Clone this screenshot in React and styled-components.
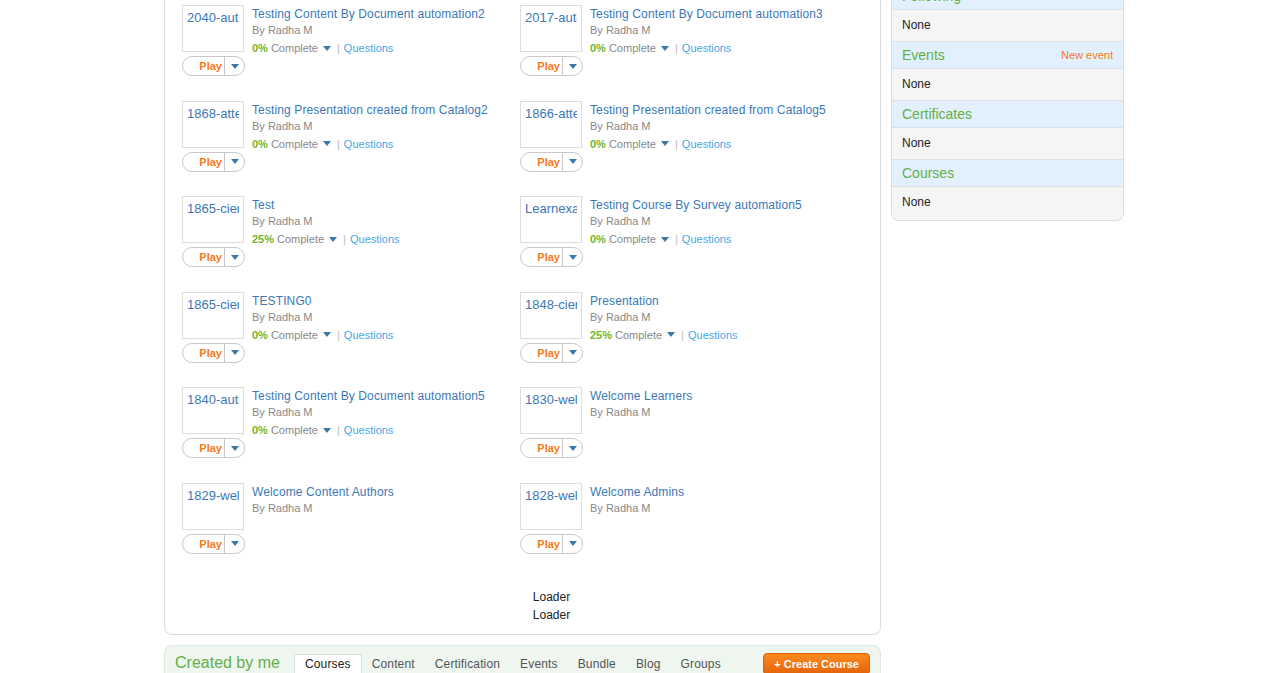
import React from 'react'
import styled, { createGlobalStyle } from 'styled-components'

const GlobalStyle = createGlobalStyle`
  html, body {
    margin: 0;
    padding: 0;
    background: #fff;
    overflow: hidden;
  }
  body {
    font-family: "Liberation Sans", Arial, sans-serif;
    color: #222;
  }
`

const Page = styled.div`
  display: flex;
  align-items: flex-start;
  padding-left: 164px;
  margin-top: -17px;
`
const MainCol = styled.div`
  width: 717px;
  display: flex;
  flex-direction: column;
  gap: 10px;
`
const Panel = styled.div`
  border: 1px solid #dcdcdc;
  border-top: none;
  border-radius: 0 0 8px 8px;
  padding: 22px 0 10px 17px;
`
const Grid = styled.div`
  display: grid;
  grid-template-columns: 338px 338px;
  grid-auto-rows: 95.6px;
`
const Item = styled.div`
  display: flex;
  gap: 7px;
`
const ThumbCol = styled.div`
  width: 63px;
  display: flex;
  flex-direction: column;
  gap: 4px;
`
const Thumb = styled.div`
  width: 62px;
  height: 47px;
  box-sizing: border-box;
  border: 1px solid #ddd;
  padding: 4px 4px 0 4px;
`
const ThumbLabel = styled.div`
  font-size: 13px;
  line-height: 16px;
  color: #3c78b5;
  white-space: nowrap;
  overflow: hidden;
`
const PlayButton = styled.div`
  width: 63px;
  height: 20px;
  box-sizing: border-box;
  border: 1px solid #c8c8c8;
  border-radius: 10px;
  display: flex;
  align-items: center;
  background: #fff;
`
const PlayLabel = styled.span`
  width: 42px;
  height: 100%;
  box-sizing: border-box;
  border-right: 1px solid #c8c8c8;
  display: flex;
  align-items: center;
  justify-content: flex-end;
  padding-right: 2px;
  font-size: 11px;
  font-weight: bold;
  color: #f47b20;
`
const Caret = styled.span`
  flex: 1;
  display: flex;
  justify-content: center;
  align-items: center;
  &::after {
    content: "";
    border-left: 4px solid transparent;
    border-right: 4px solid transparent;
    border-top: 5px solid #3b78aa;
  }
`
const Info = styled.div`
  display: flex;
  flex-direction: column;
  padding-top: 1px;
`
const Title = styled.a`
  font-size: 12px;
  line-height: 16px;
  letter-spacing: 0.12px;
  color: #3c78b5;
  text-decoration: none;
`
const Author = styled.div`
  font-size: 11px;
  line-height: 16px;
  color: #888;
`
const Status = styled.div`
  display: flex;
  align-items: center;
  font-size: 11px;
  line-height: 16px;
  color: #888;
  margin-top: 2px;
`
const Percent = styled.b`
  color: #72b52b;
  margin-right: 3px;
`
const StatusCaret = styled.span`
  display: inline-block;
  margin: 0 6px 0 5px;
  border-left: 4px solid transparent;
  border-right: 4px solid transparent;
  border-top: 5px solid #3b78aa;
`
const Pipe = styled.span`
  color: #bbb;
  margin-right: 4px;
`
const Questions = styled.a`
  color: #45a7e8;
  text-decoration: none;
`
const Loaders = styled.div`
  padding: 9px 0 0 41px;
  text-align: center;
  font-size: 12px;
  line-height: 18px;
  color: #222;
`
const TabsPanel = styled.div`
  background: #eef6ef;
  border: 1px solid #dfe9df;
  border-bottom: none;
  border-radius: 8px 8px 0 0;
  height: 40px;
  display: flex;
  align-items: flex-start;
  padding: 0 10px;
`
const TabsTitle = styled.h2`
  margin: 0 14px 0 0;
  padding-top: 7px;
  font-size: 16px;
  font-weight: normal;
  color: #64b043;
  line-height: 20px;
`
const Tabs = styled.div`
  display: flex;
  flex: 1;
  margin-top: 8px;
`
const Tab = styled.span`
  padding: ${p => (p.$active ? '1px 10px 6px' : '2px 10px 6px')};
  font-size: 12px;
  line-height: 16px;
  letter-spacing: 0.15px;
  color: ${p => (p.$active ? '#222' : '#555')};
  background: ${p => (p.$active ? '#fff' : 'transparent')};
  border: ${p => (p.$active ? '1px solid #ddd' : 'none')};
  border-bottom: none;
  border-radius: 4px 4px 0 0;
`
const CreateButton = styled.button`
  margin-top: 7px;
  height: 22px;
  padding: 0 10px;
  border: 1px solid #d95f08;
  border-radius: 4px;
  background: linear-gradient(#f98b1e, #e5630a);
  color: #fff;
  font-family: inherit;
  font-size: 11px;
  font-weight: bold;
`
const Sidebar = styled.div`
  margin-left: 10px;
  width: 233px;
  box-sizing: border-box;
  border: 1px solid #dcdcdc;
  border-top: none;
  border-radius: 0 0 8px 8px;
  overflow: hidden;
`
const SideHeader = styled.div`
  height: 26px;
  background: #e2f0fd;
  border-bottom: 1px solid #d6e2ec;
  display: flex;
  align-items: center;
  justify-content: space-between;
  padding: 0 10px;
`
const SideTitle = styled.span`
  font-size: 14px;
  color: #64b043;
`
const SideAction = styled.a`
  font-size: 11px;
  color: #f47b20;
  text-decoration: none;
`
const SideBody = styled.div`
  height: ${p => (p.$last ? '33px' : '32px')};
  background: #f5f5f5;
  border-bottom: ${p => (p.$last ? 'none' : '1px solid #e0e0e0')};
  padding: 8px 10px 0;
  box-sizing: border-box;
  font-size: 12px;
  line-height: 14px;
  color: #222;
`

const courses = [
  { thumb: '2040-automation', title: 'Testing Content By Document automation2', pct: '0%' },
  { thumb: '2017-automation', title: 'Testing Content By Document automation3', pct: '0%' },
  { thumb: '1868-attempt', title: 'Testing Presentation created from Catalog2', pct: '0%' },
  { thumb: '1866-attempt', title: 'Testing Presentation created from Catalog5', pct: '0%' },
  { thumb: '1865-cierre', title: 'Test', pct: '25%' },
  { thumb: 'Learnexa', title: 'Testing Course By Survey automation5', pct: '0%' },
  { thumb: '1865-cierre', title: 'TESTING0', pct: '0%' },
  { thumb: '1848-cierre', title: 'Presentation', pct: '25%' },
  { thumb: '1840-automation', title: 'Testing Content By Document automation5', pct: '0%' },
  { thumb: '1830-welcome', title: 'Welcome Learners' },
  { thumb: '1829-welcome', title: 'Welcome Content Authors' },
  { thumb: '1828-welcome', title: 'Welcome Admins' },
]

const sections = [
  { title: 'Following' },
  { title: 'Events', action: 'New event' },
  { title: 'Certificates' },
  { title: 'Courses' },
]

const tabs = ['Courses', 'Content', 'Certification', 'Events', 'Bundle', 'Blog', 'Groups']

function CourseItem({ course }) {
  return (
    <Item>
      <ThumbCol>
        <Thumb>
          <ThumbLabel>{course.thumb}</ThumbLabel>
        </Thumb>
        <PlayButton>
          <PlayLabel>Play</PlayLabel>
          <Caret />
        </PlayButton>
      </ThumbCol>
      <Info>
        <Title href="#">{course.title}</Title>
        <Author>By Radha M</Author>
        {course.pct && (
          <Status>
            <Percent>{course.pct}</Percent>
            Complete
            <StatusCaret />
            <Pipe>|</Pipe>
            <Questions href="#">Questions</Questions>
          </Status>
        )}
      </Info>
    </Item>
  )
}

export default function App() {
  return (
    <>
      <GlobalStyle />
      <Page>
        <MainCol>
          <Panel>
            <Grid>
              {courses.map((c, i) => (
                <CourseItem key={i} course={c} />
              ))}
            </Grid>
            <Loaders>
              <div>Loader</div>
              <div>Loader</div>
            </Loaders>
          </Panel>
          <TabsPanel>
            <TabsTitle>Created by me</TabsTitle>
            <Tabs>
              {tabs.map((t, i) => (
                <Tab key={t} $active={i === 0}>{t}</Tab>
              ))}
            </Tabs>
            <CreateButton>+ Create Course</CreateButton>
          </TabsPanel>
        </MainCol>
        <Sidebar>
          {sections.map((s, i) => (
            <div key={s.title}>
              <SideHeader>
                <SideTitle>{s.title}</SideTitle>
                {s.action && <SideAction href="#">{s.action}</SideAction>}
              </SideHeader>
              <SideBody $last={i === sections.length - 1}>None</SideBody>
            </div>
          ))}
        </Sidebar>
      </Page>
    </>
  )
}
